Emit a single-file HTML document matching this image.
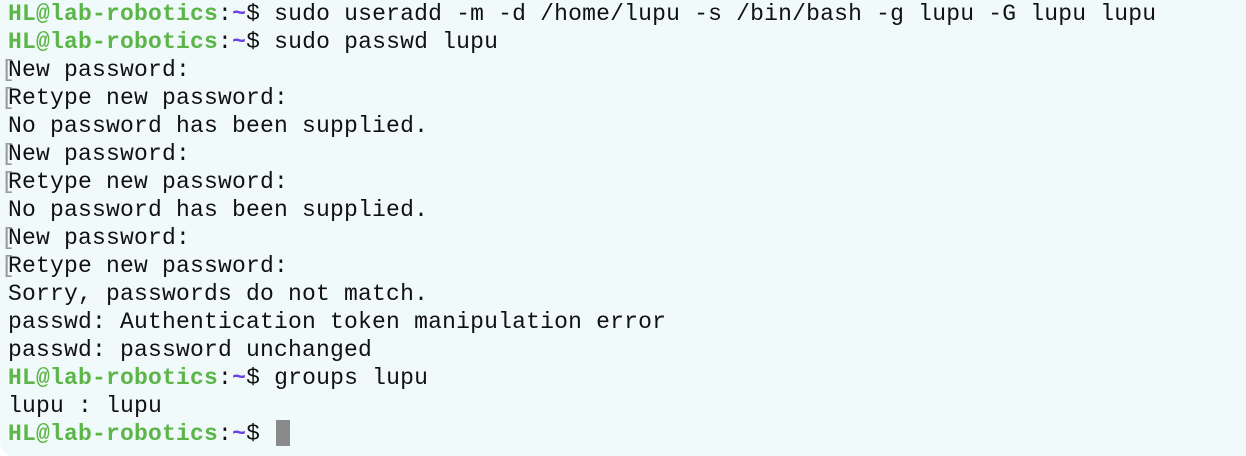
<html><head><style>
body{margin:0;background:#fff;}
.t{width:1246px;height:456px;background:#f1fafa;border-radius:0 0 0 14px;padding:0 0 0 8px;box-sizing:border-box;font-family:"Liberation Mono",monospace;font-size:23px;letter-spacing:0.2px;line-height:28px;color:#111;white-space:pre;position:relative;}
.g{color:#5bb548;font-weight:bold}.p{color:#6b3fe0;font-weight:bold}
.b{position:absolute;left:1px;color:#999;font-weight:normal}
.c{display:inline-block;width:14px;height:26px;background:#8a8a8a;vertical-align:-6px;margin-left:2px}
</style></head><body><div class="t"><span class="g">HL@lab-robotics</span>:<span class="p">~</span>$ sudo useradd -m -d /home/lupu -s /bin/bash -g lupu -G lupu lupu
<span class="g">HL@lab-robotics</span>:<span class="p">~</span>$ sudo passwd lupu
<span class="b">[</span>New password:
<span class="b">[</span>Retype new password:
No password has been supplied.
<span class="b">[</span>New password:
<span class="b">[</span>Retype new password:
No password has been supplied.
<span class="b">[</span>New password:
<span class="b">[</span>Retype new password:
Sorry, passwords do not match.
passwd: Authentication token manipulation error
passwd: password unchanged
<span class="g">HL@lab-robotics</span>:<span class="p">~</span>$ groups lupu
lupu : lupu
<span class="g">HL@lab-robotics</span>:<span class="p">~</span>$ <span class="c"></span></div></body></html>
